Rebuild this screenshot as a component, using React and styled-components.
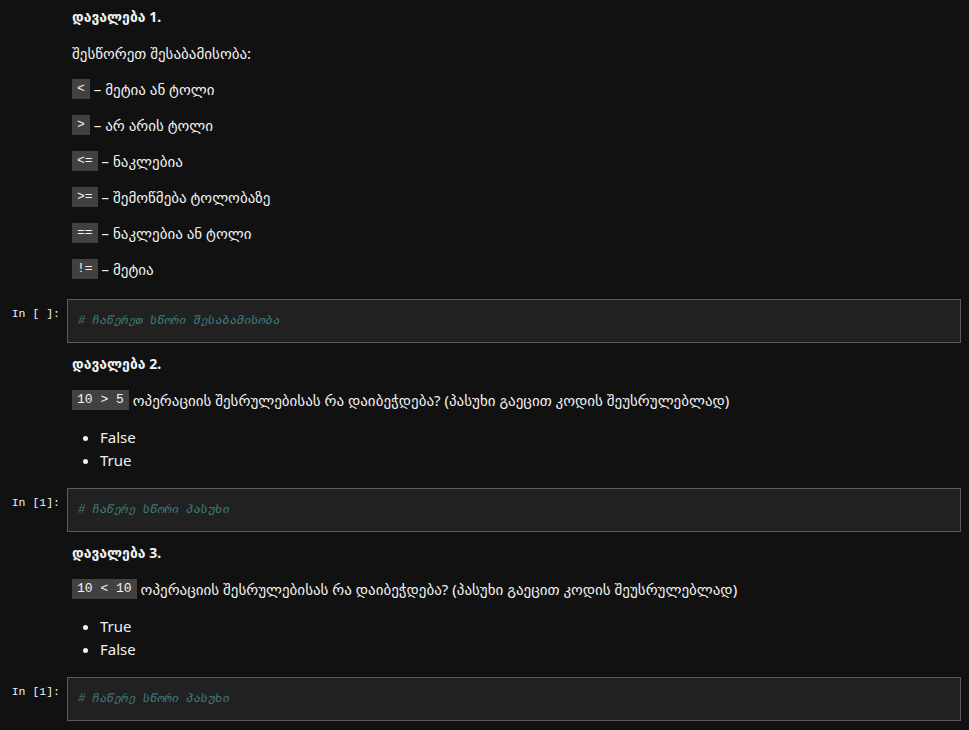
import React from "react";
import styled, { createGlobalStyle } from "styled-components";

const Global = createGlobalStyle`
  html, body { margin: 0; padding: 0; background: #111111; }
  body {
    font-family: "Noto Sans", "DejaVu Sans", sans-serif;
    font-size: 15px;
    color: #f2f2f2;
  }
`;

const Notebook = styled.div`
  width: 969px;
  display: flex;
  flex-direction: column;
`;

const Row = styled.div`
  display: grid;
  grid-template-columns: 67px 894px;
  align-items: start;
`;

const Prompt = styled.div`
  font-family: "Liberation Mono", "DejaVu Sans Mono", monospace;
  font-size: 11.5px;
  line-height: 16px;
  color: #f0f0f0;
  text-align: right;
  padding: 7px 7px 0 0;
  white-space: pre;
`;

const Markdown = styled.div`
  padding: ${(p) => p.$top}px 0 ${(p) => p.$bottom}px 5px;
`;

const Heading = styled.div`
  font-weight: 700;
  font-size: 14px;
  line-height: 20px;
  margin-bottom: 16px;
`;

const Para = styled.p`
  margin: 0 0 16px;
  line-height: 20px;
  height: 20px;
  white-space: nowrap;
  &:last-child { margin-bottom: 0; }
`;

const Chip = styled.code`
  display: inline-block;
  vertical-align: top;
  font-family: "Liberation Mono", "DejaVu Sans Mono", monospace;
  font-size: 13px;
  line-height: 20px;
  height: 20px;
  background: #414141;
  color: #f4f4f4;
  padding: 0 5px;
  margin-right: 4px;
`;

const List = styled.ul`
  margin: 0;
  padding-left: 28px;
  & li { line-height: 23px; }
`;

const CodeCell = styled.div`
  background: #212121;
  border: 1px solid #5a5a5a;
  padding: 12px 10px;
  font-family: "Liberation Mono", "DejaVu Sans Mono", monospace;
  font-style: italic;
  font-size: 12px;
  line-height: 18px;
  color: #3d7f7f;
`;

const ops = [
  ["<", "მეტია ან ტოლი"],
  [">", "არ არის ტოლი"],
  ["<=", "ნაკლებია"],
  [">=", "შემოწმება ტოლობაზე"],
  ["==", "ნაკლებია ან ტოლი"],
  ["!=", "მეტია"],
];

const Code = ({ prompt, text }) => (
  <Row>
    <Prompt>{prompt}</Prompt>
    <CodeCell># {text}</CodeCell>
  </Row>
);

export default function App() {
  return (
    <>
      <Global />
      <Notebook>
        <Row>
          <div />
          <Markdown $top={7} $bottom={20}>
            <Heading>დავალება 1.</Heading>
            <Para>შესწორეთ შესაბამისობა:</Para>
            {ops.map(([o, t]) => (
              <Para key={o}>
                <Chip>{o}</Chip>– {t}
              </Para>
            ))}
          </Markdown>
        </Row>
        <Code prompt="In [ ]:" text="ჩაწერეთ სწორი შესაბამისობა" />
        <Row>
          <div />
          <Markdown $top={11} $bottom={16}>
            <Heading>დავალება 2.</Heading>
            <Para>
              <Chip>10 &gt; 5</Chip>ოპერაციის შესრულებისას რა დაიბეჭდება? (პასუხი გაეცით კოდის შეუსრულებლად)
            </Para>
            <List>
              <li>False</li>
              <li>True</li>
            </List>
          </Markdown>
        </Row>
        <Code prompt="In [1]:" text="ჩაწერე სწორი პასუხი" />
        <Row>
          <div />
          <Markdown $top={11} $bottom={16}>
            <Heading>დავალება 3.</Heading>
            <Para>
              <Chip>10 &lt; 10</Chip>ოპერაციის შესრულებისას რა დაიბეჭდება? (პასუხი გაეცით კოდის შეუსრულებლად)
            </Para>
            <List>
              <li>True</li>
              <li>False</li>
            </List>
          </Markdown>
        </Row>
        <Code prompt="In [1]:" text="ჩაწერე სწორი პასუხი" />
      </Notebook>
    </>
  );
}
